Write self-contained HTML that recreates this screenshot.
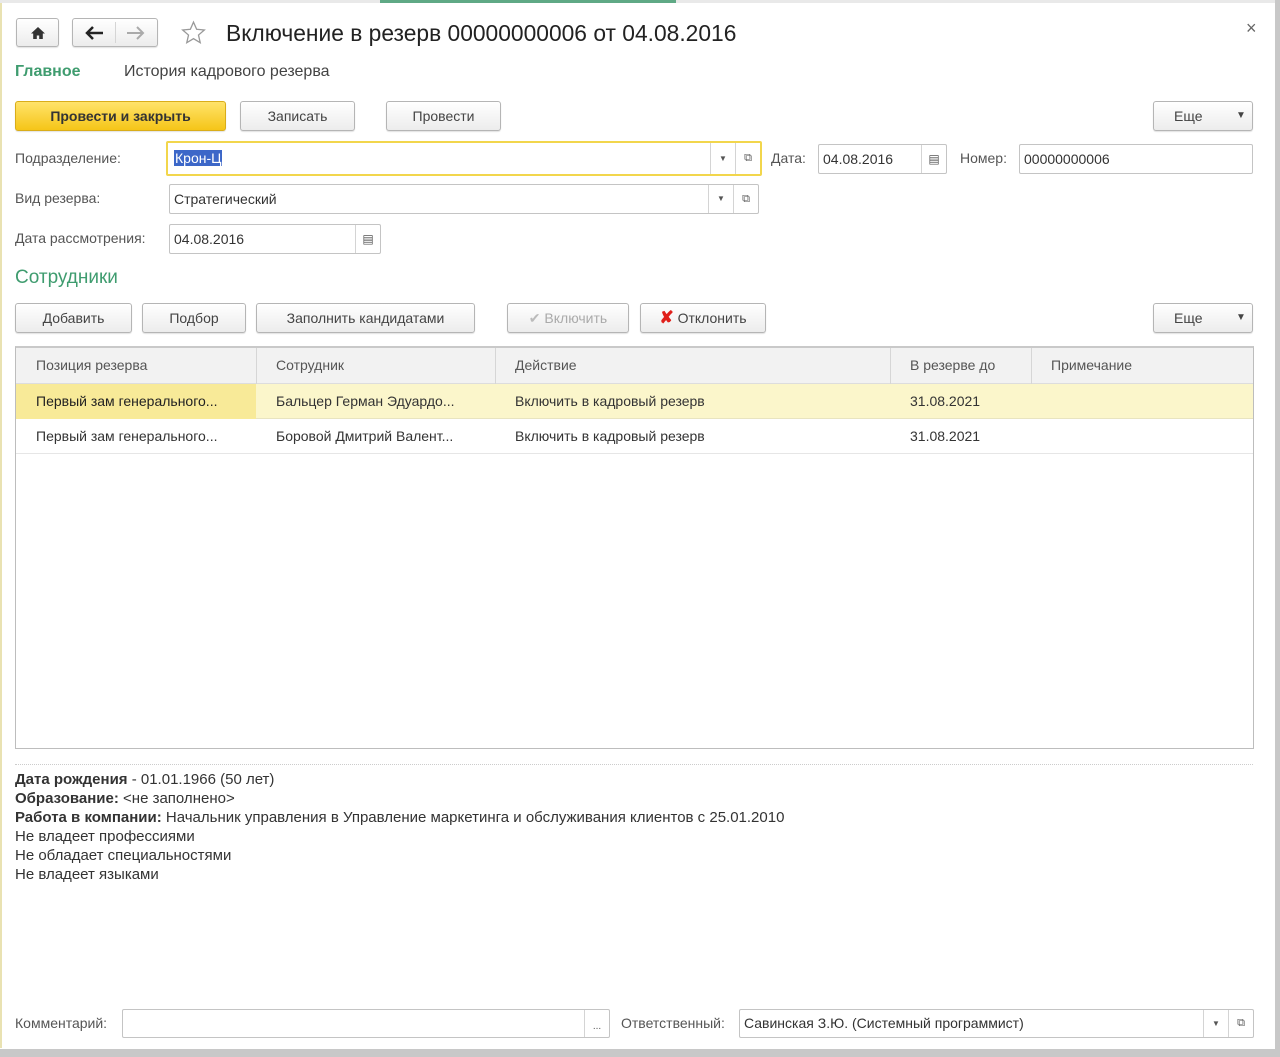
<!DOCTYPE html>
<html><head><meta charset="utf-8"><style>
*{box-sizing:border-box;margin:0;padding:0}
body{width:1280px;height:1057px;background:#fff;font-family:"Liberation Sans",Arial,sans-serif;font-size:14px;color:#333;position:relative;overflow:hidden}
.a{position:absolute;white-space:nowrap}
.btn{position:absolute;border:1px solid #b5b5b5;border-radius:3px;background:linear-gradient(#fff,#ececec);text-align:center;color:#444;box-shadow:0 1px 1px rgba(0,0,0,.12)}
.in{position:absolute;border:1px solid #c4c4c4;border-radius:2px;background:#fff;padding-left:4px;color:#333}
.lbl{position:absolute;color:#555;white-space:nowrap}
.dd{position:absolute;top:0;bottom:0;width:25px;border-left:1px solid #d4d4d4;text-align:center;font-size:8px;color:#555}
</style></head><body>
<div class="a" style="left:0;top:0;width:1280px;height:3px;background:#e9e9e9"></div>
<div class="a" style="left:380px;top:0;width:296px;height:3px;background:#5fa985"></div>
<div class="a" style="left:0;top:3px;width:2px;height:1045px;background:#e9e2b2"></div>
<div class="a" style="left:1275px;top:0;width:5px;height:1057px;background:#c8c8c8"></div>
<div class="a" style="left:0;top:1049px;width:1280px;height:8px;background:#c8c8c8"></div>

<div class="btn" style="left:16px;top:18px;width:43px;height:29px">
<svg width="16" height="14" viewBox="0 0 16 14" style="margin-top:7px"><path d="M8 1L1 7.5h2.2V13h3.6V9.5h2.4V13h3.6V7.5H15z" fill="#333"/></svg></div>
<div class="btn" style="left:72px;top:18px;width:86px;height:29px">
<div class="a" style="left:42px;top:3px;width:1px;height:21px;background:#d5d5d5"></div>
<svg class="a" style="left:12px;top:7px" width="20" height="14" viewBox="0 0 20 14"><path d="M2 7h16M8 1L2 7l6 6" stroke="#222" stroke-width="2.5" fill="none"/></svg>
<svg class="a" style="left:52px;top:7px" width="20" height="14" viewBox="0 0 20 14"><path d="M2 7h16M12 1l6 6-6 6" stroke="#aaa" stroke-width="2" fill="none"/></svg></div>
<svg class="a" style="left:180px;top:20px" width="27" height="26" viewBox="0 0 24 24"><path d="M12 2l2.9 6.6 7.1.6-5.4 4.7 1.6 7L12 17.2 5.8 20.9l1.6-7L2 9.2l7.1-.6z" fill="none" stroke="#999" stroke-width="1.2"/></svg>
<div class="a" style="left:226px;top:20px;font-size:22.8px;color:#222">Включение в резерв 00000000006 от 04.08.2016</div>
<div class="a" style="left:1246px;top:18px;font-size:18px;color:#666">×</div>

<div class="a" style="left:15px;top:63px;font-size:16px;font-weight:bold;color:#3f9c6f">Главное</div>
<div class="a" style="left:124px;top:63px;font-size:16px;color:#444">История кадрового резерва</div>

<div class="btn" style="left:15px;top:101px;width:211px;height:30px;line-height:28px;background:linear-gradient(#ffe36a,#f5c518);border-color:#d9ad1a;font-weight:bold;color:#333;font-size:14px">Провести и закрыть</div>
<div class="btn" style="left:240px;top:101px;width:115px;height:30px;line-height:28px">Записать</div>
<div class="btn" style="left:386px;top:101px;width:115px;height:30px;line-height:28px">Провести</div>
<div class="btn" style="left:1153px;top:101px;width:100px;height:30px;line-height:28px;text-align:left;padding-left:20px">Еще<span class="a" style="left:82px;font-size:10px">▼</span></div>

<div class="lbl" style="left:15px;top:150px">Подразделение:</div>
<div class="in" style="left:166px;top:141px;width:596px;height:35px;border:2px solid #f2d64c">
<span class="a" style="left:6px;top:7px;background:#3c67c8;color:#fff;padding:0 1px">Крон-Ц</span>
<div class="dd" style="right:25px;line-height:31px">▼</div><div class="dd" style="right:0;font-size:11px;line-height:31px">⧉</div></div>
<div class="lbl" style="left:771px;top:150px">Дата:</div>
<div class="in" style="left:818px;top:144px;width:129px;height:30px;line-height:28px">04.08.2016<div class="dd" style="right:0;font-size:12px;line-height:28px">▤</div></div>
<div class="lbl" style="left:960px;top:150px">Номер:</div>
<div class="in" style="left:1019px;top:144px;width:234px;height:30px;line-height:28px">00000000006</div>

<div class="lbl" style="left:15px;top:190px">Вид резерва:</div>
<div class="in" style="left:169px;top:184px;width:590px;height:30px;line-height:28px">Стратегический<div class="dd" style="right:25px;line-height:28px">▼</div><div class="dd" style="right:0;font-size:11px;line-height:28px">⧉</div></div>

<div class="lbl" style="left:15px;top:230px">Дата рассмотрения:</div>
<div class="in" style="left:169px;top:224px;width:212px;height:30px;line-height:28px">04.08.2016<div class="dd" style="right:0;font-size:12px;line-height:28px">▤</div></div>

<div class="a" style="left:15px;top:267px;font-size:19px;color:#3f9c6f">Сотрудники</div>

<div class="btn" style="left:15px;top:303px;width:117px;height:30px;line-height:28px">Добавить</div>
<div class="btn" style="left:142px;top:303px;width:104px;height:30px;line-height:28px">Подбор</div>
<div class="btn" style="left:256px;top:303px;width:219px;height:30px;line-height:28px">Заполнить кандидатами</div>
<div class="btn" style="left:507px;top:303px;width:122px;height:30px;line-height:28px;color:#aaa"><span style="color:#bbb">✔</span> Включить</div>
<div class="btn" style="left:640px;top:303px;width:126px;height:30px;line-height:28px"><span style="color:#e0201b;font-weight:bold;font-size:17px">✘</span> Отклонить</div>
<div class="btn" style="left:1153px;top:303px;width:100px;height:30px;line-height:28px;text-align:left;padding-left:20px">Еще<span class="a" style="left:82px;font-size:10px">▼</span></div>

<div class="a" style="left:15px;top:346px;width:1239px;height:403px;border:1px solid #bdbdbd;border-top:2px solid #c9c9c9">
<div class="a" style="left:0;top:0;width:1237px;height:36px;background:#f2f2f2;border-bottom:1px solid #ddd"></div>
<div class="a" style="left:240px;top:0;width:1px;height:36px;background:#d6d6d6"></div>
<div class="a" style="left:479px;top:0;width:1px;height:36px;background:#d6d6d6"></div>
<div class="a" style="left:874px;top:0;width:1px;height:36px;background:#d6d6d6"></div>
<div class="a" style="left:1015px;top:0;width:1px;height:36px;background:#d6d6d6"></div>
<div class="a" style="left:20px;top:9px;color:#555">Позиция резерва</div>
<div class="a" style="left:260px;top:9px;color:#555">Сотрудник</div>
<div class="a" style="left:499px;top:9px;color:#555">Действие</div>
<div class="a" style="left:894px;top:9px;color:#555">В резерве до</div>
<div class="a" style="left:1035px;top:9px;color:#555">Примечание</div>
<div class="a" style="left:0;top:36px;width:1237px;height:35px;background:#fbf6cb;border-bottom:1px solid #e8e4c0"></div>
<div class="a" style="left:0;top:36px;width:240px;height:35px;background:#f8ea98"></div>
<div class="a" style="left:20px;top:45px;color:#222">Первый зам генерального...</div>
<div class="a" style="left:260px;top:45px">Бальцер Герман Эдуардо...</div>
<div class="a" style="left:499px;top:45px">Включить в кадровый резерв</div>
<div class="a" style="left:894px;top:45px">31.08.2021</div>
<div class="a" style="left:0;top:71px;width:1237px;height:35px;border-bottom:1px solid #e6e6e6"></div>
<div class="a" style="left:20px;top:80px">Первый зам генерального...</div>
<div class="a" style="left:260px;top:80px">Боровой Дмитрий Валент...</div>
<div class="a" style="left:499px;top:80px">Включить в кадровый резерв</div>
<div class="a" style="left:894px;top:80px">31.08.2021</div>
</div>

<div class="a" style="left:15px;top:764px;width:1238px;border-top:1px dotted #ccc"></div>
<div class="a" style="left:15px;top:770px;line-height:19px;color:#333;font-size:15px;white-space:normal">
<b>Дата рождения</b> - 01.01.1966 (50 лет)<br>
<b>Образование:</b> &lt;не заполнено&gt;<br>
<b>Работа в компании:</b> Начальник управления в Управление маркетинга и обслуживания клиентов с 25.01.2010<br>
Не владеет профессиями<br>Не обладает специальностями<br>Не владеет языками</div>

<div class="lbl" style="left:15px;top:1015px">Комментарий:</div>
<div class="in" style="left:122px;top:1009px;width:488px;height:29px"><div class="dd" style="right:0;line-height:34px;font-size:10px">...</div></div>
<div class="lbl" style="left:621px;top:1015px">Ответственный:</div>
<div class="in" style="left:739px;top:1009px;width:515px;height:29px;line-height:27px">Савинская З.Ю. (Системный программист)<div class="dd" style="right:25px;line-height:27px">▼</div><div class="dd" style="right:0;font-size:11px;line-height:27px">⧉</div></div>
</body></html>
